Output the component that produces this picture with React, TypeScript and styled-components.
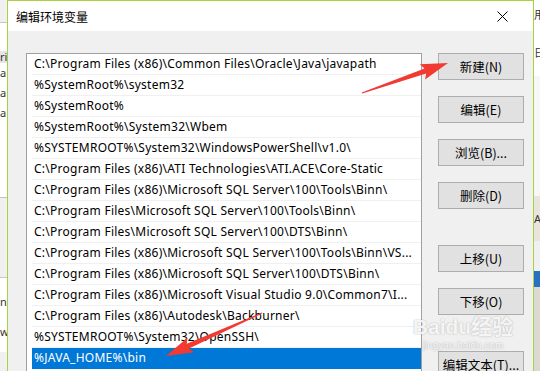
import React from "react";
import styled, { createGlobalStyle } from "styled-components";

const Global = createGlobalStyle`
  html, body { margin: 0; padding: 0; }
  body { width: 540px; height: 371px; overflow: hidden; background: #f0f0f0; }
  #root { width: 540px; height: 371px; }
`;

const Stage = styled.div`
  position: relative;
  width: 540px;
  height: 371px;
  overflow: hidden;
  display: flex;
  flex-direction: row;
`;

const SideStrip = styled.div<{ $w: number }>`
  width: ${(p) => p.$w}px;
  flex: none;
  display: flex;
  flex-direction: column;
  overflow: hidden;
`;

const Band = styled.div<{ $h: number; $bg: string; $line?: string }>`
  height: ${(p) => p.$h}px;
  flex: none;
  background: ${(p) => p.$bg};
  border-bottom: ${(p) => (p.$line ? `1px solid ${p.$line}` : "none")};
  font-family: "Noto Sans", "Noto Sans CJK SC", sans-serif;
  font-size: 11px;
  line-height: ${(p) => p.$h}px;
  color: #333;
  white-space: nowrap;
  overflow: hidden;
`;

const Dialog = styled.div`
  flex: none;
  width: 525px;
  border: 1px solid #a8d23e;
  border-bottom: none;
  display: flex;
  flex-direction: column;
  background: #f0f0f0;
`;

const TitleBar = styled.div`
  height: 30px;
  flex: none;
  background: #ffffff;
  display: flex;
  align-items: center;
  justify-content: space-between;
  padding: 0 25px 0 8px;
`;

const Title = styled.div`
  font-family: "Noto Sans CJK SC", sans-serif;
  font-size: 12px;
  color: #000;
  padding-top: 1px;
`;

const CloseIcon = styled.svg`
  width: 11px;
  height: 11px;
  display: block;
`;

const Body = styled.div`
  display: flex;
  flex-direction: row;
  gap: 16px;
  padding: 22px 14px 0 18px;
`;

const ListBox = styled.div`
  width: 389px;
  height: 340px;
  flex: none;
  background: #ffffff;
  border: 1px solid #a0a0a0;
  padding-left: 5px;
  box-sizing: content-box;
  display: flex;
  flex-direction: column;
`;

const Row = styled.div<{ $selected?: boolean }>`
  height: 20px;
  flex: none;
  border-bottom: 1px solid ${(p) => (p.$selected ? "#0078d7" : "#f0f0f0")};
  background: ${(p) => (p.$selected ? "#0078d7" : "transparent")};
  color: ${(p) => (p.$selected ? "#ffffff" : "#000000")};
  padding-left: 2px;
  font-family: "Noto Sans", sans-serif;
  font-size: 12px;
  letter-spacing: 0.25px;
  line-height: 20px;
  white-space: nowrap;
  overflow: hidden;
`;

const ButtonColumn = styled.div`
  width: 86px;
  flex: none;
  display: flex;
  flex-direction: column;
  gap: 16px;
`;

const Button = styled.div<{ $extraTop?: number }>`
  height: 25px;
  flex: none;
  margin-top: ${(p) => p.$extraTop ?? 0}px;
  background: #e1e1e1;
  border: 1px solid #adadad;
  display: flex;
  align-items: center;
  justify-content: center;
  font-family: "Noto Sans CJK SC", sans-serif;
  font-size: 12.5px;
  color: #000;
`;

const Overlay = styled.svg`
  position: absolute;
  left: 0;
  top: 0;
  width: 540px;
  height: 371px;
  pointer-events: none;
`;

const Watermark = styled.div`
  position: absolute;
  left: 416px;
  top: 314px;
  width: 94px;
  display: flex;
  flex-direction: column;
  align-items: center;
  pointer-events: none;
  color: rgba(255, 255, 255, 0.9);
  text-shadow: 0 0 1px rgba(130, 130, 130, 0.55), 0 0 2px rgba(150, 150, 150, 0.3);
`;

const WmMain = styled.div`
  font-family: "Liberation Sans", "Noto Sans CJK SC", sans-serif;
  font-weight: bold;
  font-size: 21px;
  line-height: 26px;
  white-space: nowrap;
`;

const WmSub = styled.div`
  font-family: "Liberation Sans", sans-serif;
  font-size: 10px;
  line-height: 11px;
  white-space: nowrap;
`;

function arrowPoints(tx: number, ty: number, hx: number, hy: number) {
  const dx = hx - tx;
  const dy = hy - ty;
  const len = Math.hypot(dx, dy);
  const ux = dx / len;
  const uy = dy / len;
  const nx = -uy;
  const ny = ux;
  const headLen = 24;
  const headHalf = 8;
  const neckHalf = 2.6;
  const tailHalf = 0.6;
  const bx = hx - ux * headLen;
  const by = hy - uy * headLen;
  const pts: [number, number][] = [
    [tx + nx * tailHalf, ty + ny * tailHalf],
    [bx + nx * neckHalf, by + ny * neckHalf],
    [bx + nx * headHalf - ux * 3, by + ny * headHalf - uy * 3],
    [hx, hy],
    [bx - nx * headHalf - ux * 3, by - ny * headHalf - uy * 3],
    [bx - nx * neckHalf, by - ny * neckHalf],
    [tx - nx * tailHalf, ty - ny * tailHalf],
  ];
  return pts.map((p) => `${p[0].toFixed(1)},${p[1].toFixed(1)}`).join(" ");
}

const rows = [
  "C:\\Program Files (x86)\\Common Files\\Oracle\\Java\\javapath",
  "%SystemRoot%\\system32",
  "%SystemRoot%",
  "%SystemRoot%\\System32\\Wbem",
  "%SYSTEMROOT%\\System32\\WindowsPowerShell\\v1.0\\",
  "C:\\Program Files (x86)\\ATI Technologies\\ATI.ACE\\Core-Static",
  "C:\\Program Files (x86)\\Microsoft SQL Server\\100\\Tools\\Binn\\",
  "C:\\Program Files\\Microsoft SQL Server\\100\\Tools\\Binn\\",
  "C:\\Program Files\\Microsoft SQL Server\\100\\DTS\\Binn\\",
  "C:\\Program Files (x86)\\Microsoft SQL Server\\100\\Tools\\Binn\\VS...",
  "C:\\Program Files (x86)\\Microsoft SQL Server\\100\\DTS\\Binn\\",
  "C:\\Program Files (x86)\\Microsoft Visual Studio 9.0\\Common7\\I...",
  "C:\\Program Files (x86)\\Autodesk\\Backburner\\",
  "%SYSTEMROOT%\\System32\\OpenSSH\\",
  "%JAVA_HOME%\\bin",
];

const buttons: { label: string; extra?: number }[] = [
  { label: "新建(N)" },
  { label: "编辑(E)" },
  { label: "浏览(B)..." },
  { label: "删除(D)" },
  { label: "上移(U)", extra: 20 },
  { label: "下移(O)" },
  { label: "编辑文本(T)...", extra: 20 },
];

export default function App() {
  return (
    <>
      <Global />
      <Stage>
        <SideStrip $w={7}>
          <Band $h={22} $bg="#f0f0f0" $line="#c8c8c8" />
          <Band $h={28} $bg="#ffffff" />
          <Band $h={12} $bg="#e5e5e5">ri</Band>
          <Band $h={20} $bg="#ffffff">a</Band>
          <Band $h={20} $bg="#ffffff">a</Band>
          <Band $h={20} $bg="#ffffff">a</Band>
          <Band $h={74} $bg="#ffffff" $line="#c0c0c0" />
          <Band $h={79} $bg="#f0f0f0" $line="#c8c8c8" />
          <Band $h={14} $bg="#ffffff" />
          <Band $h={20} $bg="#ffffff">n3</Band>
          <Band $h={40} $bg="#ffffff">w</Band>
        </SideStrip>
        <Dialog>
          <TitleBar>
            <Title>编辑环境变量</Title>
            <CloseIcon viewBox="0 0 11 11">
              <path d="M0.5 0.5 L10.5 10.5 M10.5 0.5 L0.5 10.5" stroke="#000" strokeWidth="1" fill="none" />
            </CloseIcon>
          </TitleBar>
          <Body>
            <ListBox>
              {rows.map((r, i) => (
                <Row key={i} $selected={i === rows.length - 1}>
                  {r}
                </Row>
              ))}
            </ListBox>
            <ButtonColumn>
              {buttons.map((b) => (
                <Button key={b.label} $extraTop={b.extra}>
                  {b.label}
                </Button>
              ))}
            </ButtonColumn>
          </Body>
        </Dialog>
        <SideStrip $w={6}>
          <Band $h={30} $bg="#ffffff">用</Band>
          <Band $h={46} $bg="#ffffff">日</Band>
          <Band $h={120} $bg="#f7f7f7" />
          <Band $h={45} $bg="#e9e4dc">A</Band>
          <Band $h={30} $bg="#f0f0f0" />
          <Band $h={16} $bg="#2a6fc0" />
          <Band $h={84} $bg="#dcd9d2" />
        </SideStrip>
        <Watermark>
          <WmMain>Baidu经验</WmMain>
          <WmSub>jingyan.baidu.com</WmSub>
        </Watermark>
        <Overlay viewBox="0 0 540 371">
          <polygon points={arrowPoints(362, 93, 448, 63)} fill="#f03a32" />
          <polygon points={arrowPoints(262, 313, 166, 356)} fill="#f03a32" />
        </Overlay>
      </Stage>
    </>
  );
}
